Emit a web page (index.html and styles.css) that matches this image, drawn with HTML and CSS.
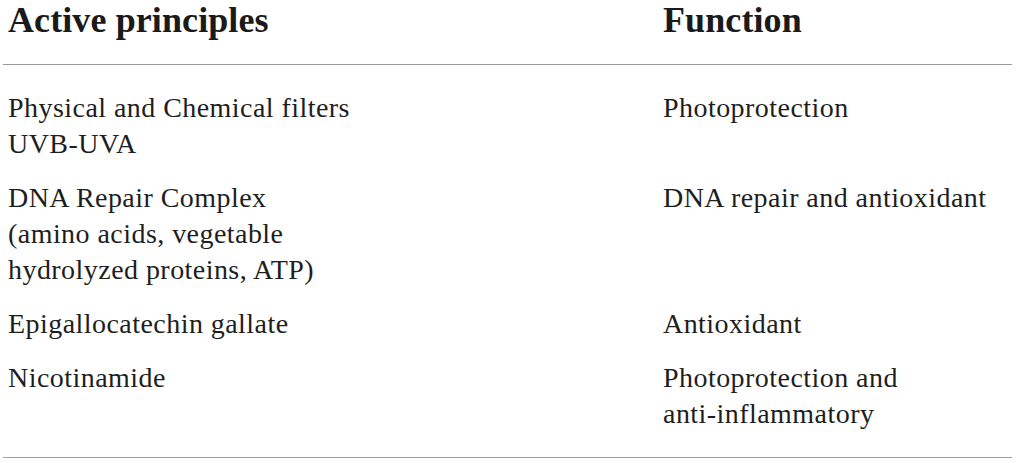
FILE: index.html
```html
<!DOCTYPE html>
<html lang="en">
<head>
<meta charset="utf-8">
<title>Active principles</title>
<link rel="stylesheet" href="styles.css">
</head>
<body>
<table class="tbl">
  <thead>
    <tr>
      <th class="col-a">Active principles</th>
      <th class="col-b">Function</th>
    </tr>
  </thead>
  <tbody>
    <tr>
      <td>Physical and Chemical filters<br>UVB-UVA</td>
      <td>Photoprotection</td>
    </tr>
    <tr>
      <td>DNA Repair Complex<br>(amino acids, vegetable<br>hydrolyzed proteins, ATP)</td>
      <td>DNA repair and antioxidant</td>
    </tr>
    <tr>
      <td>Epigallocatechin gallate</td>
      <td>Antioxidant</td>
    </tr>
    <tr>
      <td>Nicotinamide</td>
      <td>Photoprotection and<br>anti-inflammatory</td>
    </tr>
  </tbody>
</table>
</body>
</html>
```
FILE: styles.css
```css
html, body {
  margin: 0;
  padding: 0;
  background: #ffffff;
}
body {
  font-family: "Liberation Serif", "Times New Roman", serif;
  color: #1e1e1e;
}
.tbl {
  margin: 0 5px 0 3px;
  width: 1009px;
  border-collapse: collapse;
  border-bottom: 1px solid #a0a0a0;
}
.tbl th {
  text-align: left;
  font-weight: bold;
  font-size: 36px;
  line-height: 40px;
  letter-spacing: 0.1px;
  padding: 0 5px 24px 5px;
  border-bottom: 1px solid #9a9a9a;
  vertical-align: top;
  color: #1a1a1a;
}
.col-a {
  width: 645px;
}
.tbl td {
  font-size: 28px;
  line-height: 36px;
  letter-spacing: 0.45px;
  padding: 9px 5px;
  vertical-align: top;
}
.tbl tbody tr:first-child td {
  padding-top: 25px;
}
.tbl tbody tr:last-child td {
  padding-bottom: 25px;
}
```
